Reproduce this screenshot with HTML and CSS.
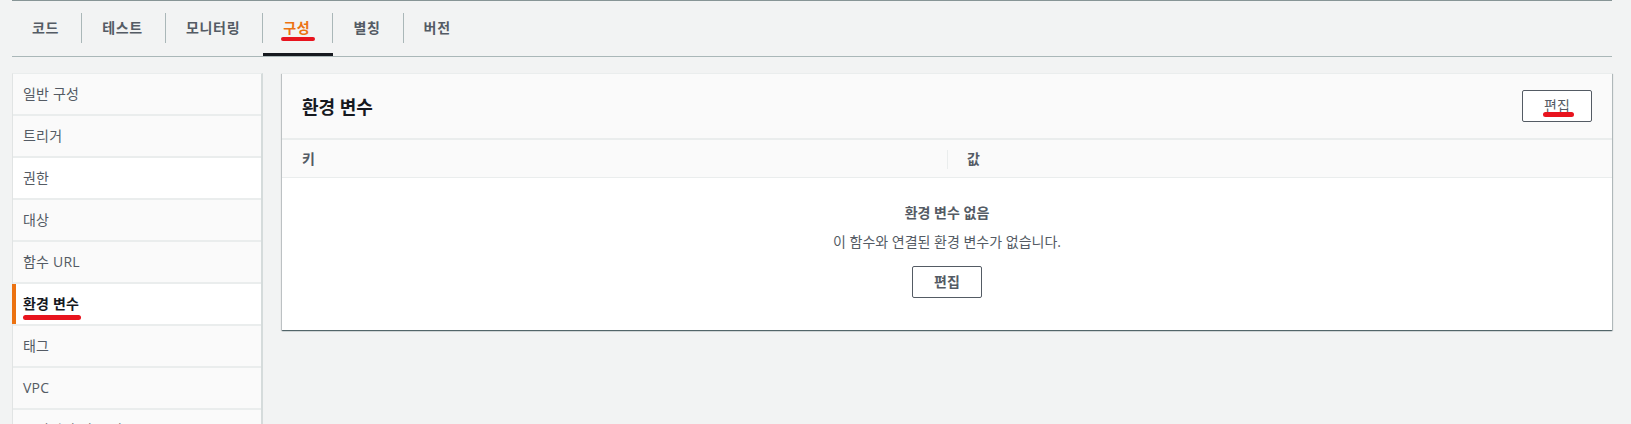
FILE: index.html
```html
<!DOCTYPE html>
<html lang="ko">
<head>
<meta charset="utf-8">
<title>구성 - 환경 변수</title>
<link rel="stylesheet" href="styles.css">
</head>
<body>
<div class="topbar"></div>
<nav class="tabs">
  <a class="tab">코드</a>
  <a class="tab">테스트</a>
  <a class="tab">모니터링</a>
  <a class="tab active"><span class="mark mark-tab">구성</span></a>
  <a class="tab">별칭</a>
  <a class="tab">버전</a>
</nav>
<div class="main">
  <ul class="side">
    <li class="side-item">일반 구성</li>
    <li class="side-item">트리거</li>
    <li class="side-item white">권한</li>
    <li class="side-item">대상</li>
    <li class="side-item">함수 URL</li>
    <li class="side-item active"><span class="mark mark-side">환경 변수</span></li>
    <li class="side-item">태그</li>
    <li class="side-item">VPC</li>
    <li class="side-item">모니터링 및 운영 도구</li>
  </ul>
  <section class="card">
    <header class="card-head">
      <h2 class="card-title">환경 변수</h2>
      <button class="btn btn-head"><span class="mark mark-btn">편집</span></button>
    </header>
    <div class="thead">
      <div class="th">키</div>
      <div class="th th-sep">값</div>
    </div>
    <div class="empty">
      <div class="empty-title">환경 변수 없음</div>
      <div class="empty-desc">이 함수와 연결된 환경 변수가 없습니다.</div>
      <button class="btn btn-empty">편집</button>
    </div>
  </section>
</div>
</body>
</html>
```
FILE: styles.css
```css
* { box-sizing: border-box; }

body {
  margin: 0;
  height: 424px;
  overflow: hidden;
  background: #f2f3f3;
  font-family: "Open Sans", "Noto Sans CJK KR", sans-serif;
  font-size: 14px;
  color: #545b64;
}

.topbar {
  height: 1px;
  margin: 0 19px 0 12px;
  background: #879596;
}

.tabs {
  display: flex;
  margin: 0 19px 0 12px;
  padding-top: 12px;
  border-bottom: 1px solid #aab7b8;
}

.tab {
  position: relative;
  height: 43px;
  padding: 0 22px 0 20px;
  line-height: 30px;
  font-weight: 700;
  letter-spacing: 0.7px;
  color: #545b64;
}

.tab + .tab { padding-left: 21px; }

.tab + .tab::before {
  content: "";
  position: absolute;
  left: 0;
  top: 0;
  width: 1px;
  height: 30px;
  background: #aab7b8;
}

.tab.active { color: #ec7211; }

.tab.active::after {
  content: "";
  position: absolute;
  left: 1px;
  right: -1px;
  bottom: 0;
  height: 3px;
  background: #16191f;
}

.mark {
  position: relative;
  display: inline-block;
}

.mark::after {
  content: "";
  position: absolute;
  background: #e8141e;
  border-radius: 3px;
}

.mark-tab::after { left: -2px; right: -5px; top: 24px; height: 4px; }
.mark-side::after { left: 0; right: -2px; top: 31px; height: 5px; }
.mark-btn::after { left: -1px; right: -4px; top: 21px; height: 5px; }

.main {
  display: flex;
  align-items: flex-start;
  gap: 19px;
  margin: 16px 19px 0 12px;
}

.side {
  display: flex;
  flex-direction: column;
  gap: 2px;
  width: 251px;
  flex: none;
  margin: 0;
  padding: 0;
  list-style: none;
  background: #eaeded;
  border-top: 1px solid #eaeded;
  border-left: 1px solid #e1e4e4;
  border-right: 2px solid #d5dbdb;
}

.side-item {
  position: relative;
  height: 40px;
  padding-left: 10px;
  line-height: 40px;
  background: #fafafa;
  color: #545b64;
  letter-spacing: 0.2px;
}

.side-item.white { background: #fff; }

.side-item.active {
  background: #fff;
  color: #16191f;
  font-weight: 700;
}

.side-item.active::before {
  content: "";
  position: absolute;
  left: -1px;
  top: 0;
  bottom: 0;
  width: 4px;
  background: #ec7211;
}

.card {
  flex: 1;
  background: #fff;
  border-top: 1px solid #eaeded;
  box-shadow: 0 1px 1px 0 rgba(0, 28, 36, 0.5), 1px 1px 1px 0 rgba(0, 28, 36, 0.2), -1px 1px 1px 0 rgba(0, 28, 36, 0.15);
}

.card-head {
  display: flex;
  align-items: center;
  justify-content: space-between;
  height: 66px;
  padding: 0 20px;
  background: #fafafa;
  border-bottom: 2px solid #eaeded;
}

.card-title {
  margin: 0;
  font-size: 18px;
  font-weight: 700;
  color: #16191f;
}

.btn {
  width: 70px;
  height: 32px;
  padding: 0;
  border: 1px solid #545b64;
  border-radius: 2px;
  background: #fff;
  font-family: inherit;
  font-size: 14px;
  font-weight: 700;
  line-height: 30px;
  color: #545b64;
}

.btn-head { font-weight: 400; }

.thead {
  display: grid;
  grid-template-columns: 1fr 1fr;
  height: 38px;
  background: #fafafa;
  border-bottom: 1px solid #eaeded;
}

.th {
  position: relative;
  padding-left: 20px;
  line-height: 37px;
  font-weight: 700;
  color: #545b64;
}

.th-sep::before {
  content: "";
  position: absolute;
  left: 0;
  top: 10px;
  width: 1px;
  height: 19px;
  background: #eaeded;
}

.empty {
  padding: 25px 20px 32px;
  text-align: center;
}

.empty-title {
  line-height: 20px;
  font-weight: 700;
  color: #545b64;
}

.empty-desc {
  margin-top: 9px;
  line-height: 20px;
  color: #545b64;
}

.btn-empty { margin-top: 14px; }
```
